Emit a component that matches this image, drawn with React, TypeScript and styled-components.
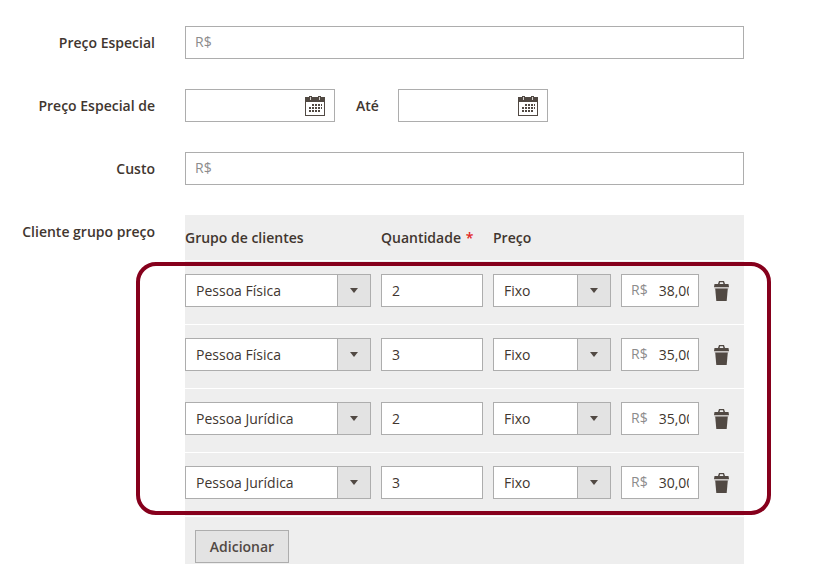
import React from "react";
import styled, { createGlobalStyle } from "styled-components";

const Global = createGlobalStyle`
  html, body { margin: 0; padding: 0; background: #fff; overflow: hidden; }
  body { font-family: "Open Sans", "Liberation Sans", sans-serif; font-size: 14px; color: #41362f; }
`;

const Page = styled.div`
  width: 819px;
  height: 564px;
  overflow: hidden;
  padding-top: 26px;
  box-sizing: border-box;
  display: flex;
  flex-direction: column;
`;

const FieldRow = styled.div<{ $mb: number }>`
  display: grid;
  grid-template-columns: 155px 559px;
  column-gap: 30px;
  align-items: center;
  margin-bottom: ${(p) => p.$mb}px;
`;

const Label = styled.label`
  text-align: right;
  font-weight: 600;
  font-size: 14px;
  line-height: 33px;
  height: 33px;
`;

const TableLabel = styled(Label)`
  align-self: start;
`;

const Box = styled.div<{ $w?: number }>`
  box-sizing: border-box;
  height: 33px;
  width: ${(p) => (p.$w ? `${p.$w}px` : "100%")};
  border: 1px solid #adadad;
  background: #fff;
  display: flex;
  align-items: center;
  flex: none;
`;

const Prefix = styled.span`
  color: #8c8c8c;
  padding-left: 9px;
  padding-bottom: 2px;
  font-size: 14px;
  flex: none;
`;

const DateBox = styled(Box)`
  justify-content: flex-end;
  padding-right: 9px;
`;

const DateLine = styled.div`
  display: flex;
  align-items: center;
`;

const Until = styled.span`
  font-weight: 600;
  margin: 0 19px 0 21px;
  width: 23px;
`;

const Panel = styled.div`
  position: relative;
  background: #eee;
  width: 559px;
  height: 349px;
`;

const HeadRow = styled.div`
  height: 46px;
  display: flex;
  align-items: flex-start;
  padding-top: 13px;
  box-sizing: border-box;
  font-weight: 600;
  border-bottom: 1px solid #fff;
  line-height: 20px;
`;

const Head = styled.span<{ $w: number }>`
  width: ${(p) => p.$w}px;
  flex: none;
`;

const Star = styled.span`
  color: #e22626;
  margin-left: 1px;
`;

const Row = styled.div`
  box-sizing: border-box;
  height: 64px;
  display: flex;
  align-items: flex-start;
  padding-top: 13px;
  gap: 10px;
  border-bottom: 1px solid #fff;
`;

const SelectBox = styled(Box)`
  justify-content: space-between;
`;

const SelectText = styled.span`
  padding-left: 10px;
`;

const Arrow = styled.span`
  box-sizing: border-box;
  width: 33px;
  height: 31px;
  background: #e3e3e3;
  border-left: 1px solid #adadad;
  display: flex;
  align-items: center;
  justify-content: center;
  &::after {
    content: "";
    border-left: 4px solid transparent;
    border-right: 4px solid transparent;
    border-top: 5px solid #514943;
  }
`;

const QtyText = styled.span`
  padding-left: 10px;
`;

const Clip = styled.span`
  display: block;
  overflow: hidden;
  white-space: nowrap;
  width: 30px;
  margin-left: 11px;
`;

const Trash = styled.span`
  margin-left: 5px;
  margin-top: 7px;
  display: block;
  height: 20px;
`;

const Footer = styled.div`
  padding: 13px 0 0 10px;
`;

const Button = styled.button`
  box-sizing: border-box;
  width: 94px;
  height: 33px;
  padding: 0;
  border: 1px solid #adadad;
  background: #e3e3e3;
  color: #514943;
  font-family: inherit;
  font-size: 14px;
  font-weight: 600;
`;

const Highlight = styled.div`
  position: absolute;
  left: -49px;
  top: 47px;
  width: 635px;
  height: 253px;
  box-sizing: border-box;
  border: 4px solid #86001c;
  border-radius: 20px;
  pointer-events: none;
`;

const CalendarIcon = () => (
  <svg width="20" height="20" viewBox="0 0 20 20" shapeRendering="crispEdges">
    <path fill="#514943" d="M0 1h4V0h3v1h6V0h3v1h4v19H0z" />
    <path fill="#fff" d="M1 6h18v13H1z" />
    <path fill="#d8d4d0" d="M5 1h1v3H5zM14 1h1v3h-1z" />
    <path
      fill="#514943"
      d="M7 8h2v2H7zM10 8h2v2h-2zM13 8h2v2h-2zM16 8h1v2h-1zM4 11h2v2H4zM7 11h2v2H7zM10 11h2v2h-2zM13 11h2v2h-2zM16 11h1v2h-1zM4 14h2v2H4zM7 14h2v2H7zM10 14h2v2h-2zM13 14h2v2h-2z"
    />
  </svg>
);

const TrashIcon = () => (
  <svg width="15" height="20" viewBox="0 0 15 20">
    <path fill="#514943" d="M5 0h5l1 3h3.5l.5 3H0l.5-3H4zM6 1.3 5.6 3h3.8L9 1.3z" />
    <path fill="#c9c5c2" d="M0 6h15v1.5H0z" />
    <path fill="#514943" d="M1.2 7.5h12.6L12.7 20H2.3z" />
  </svg>
);

const rows = [
  { group: "Pessoa Física", qty: "2", price: "38,00" },
  { group: "Pessoa Física", qty: "3", price: "35,00" },
  { group: "Pessoa Jurídica", qty: "2", price: "35,00" },
  { group: "Pessoa Jurídica", qty: "3", price: "30,00" },
];

export default function App() {
  return (
    <Page>
      <Global />
      <FieldRow $mb={30}>
        <Label>Preço Especial</Label>
        <Box>
          <Prefix>R$</Prefix>
        </Box>
      </FieldRow>
      <FieldRow $mb={30}>
        <Label>Preço Especial de</Label>
        <DateLine>
          <DateBox $w={150}>
            <CalendarIcon />
          </DateBox>
          <Until>Até</Until>
          <DateBox $w={150}>
            <CalendarIcon />
          </DateBox>
        </DateLine>
      </FieldRow>
      <FieldRow $mb={30}>
        <Label>Custo</Label>
        <Box>
          <Prefix>R$</Prefix>
        </Box>
      </FieldRow>
      <FieldRow $mb={0}>
        <TableLabel>Cliente grupo preço</TableLabel>
        <Panel>
          <HeadRow>
            <Head $w={196}>Grupo de clientes</Head>
            <Head $w={112}>
              Quantidade <Star>*</Star>
            </Head>
            <Head $w={100}>Preço</Head>
          </HeadRow>
          {rows.map((r, i) => (
            <Row key={i}>
              <SelectBox $w={186}>
                <SelectText>{r.group}</SelectText>
                <Arrow />
              </SelectBox>
              <Box $w={102}>
                <QtyText>{r.qty}</QtyText>
              </Box>
              <SelectBox $w={118}>
                <SelectText>Fixo</SelectText>
                <Arrow />
              </SelectBox>
              <Box $w={78}>
                <Prefix>R$</Prefix>
                <Clip>{r.price}</Clip>
              </Box>
              <Trash>
                <TrashIcon />
              </Trash>
            </Row>
          ))}
          <Footer>
            <Button>Adicionar</Button>
          </Footer>
          <Highlight />
        </Panel>
      </FieldRow>
    </Page>
  );
}
